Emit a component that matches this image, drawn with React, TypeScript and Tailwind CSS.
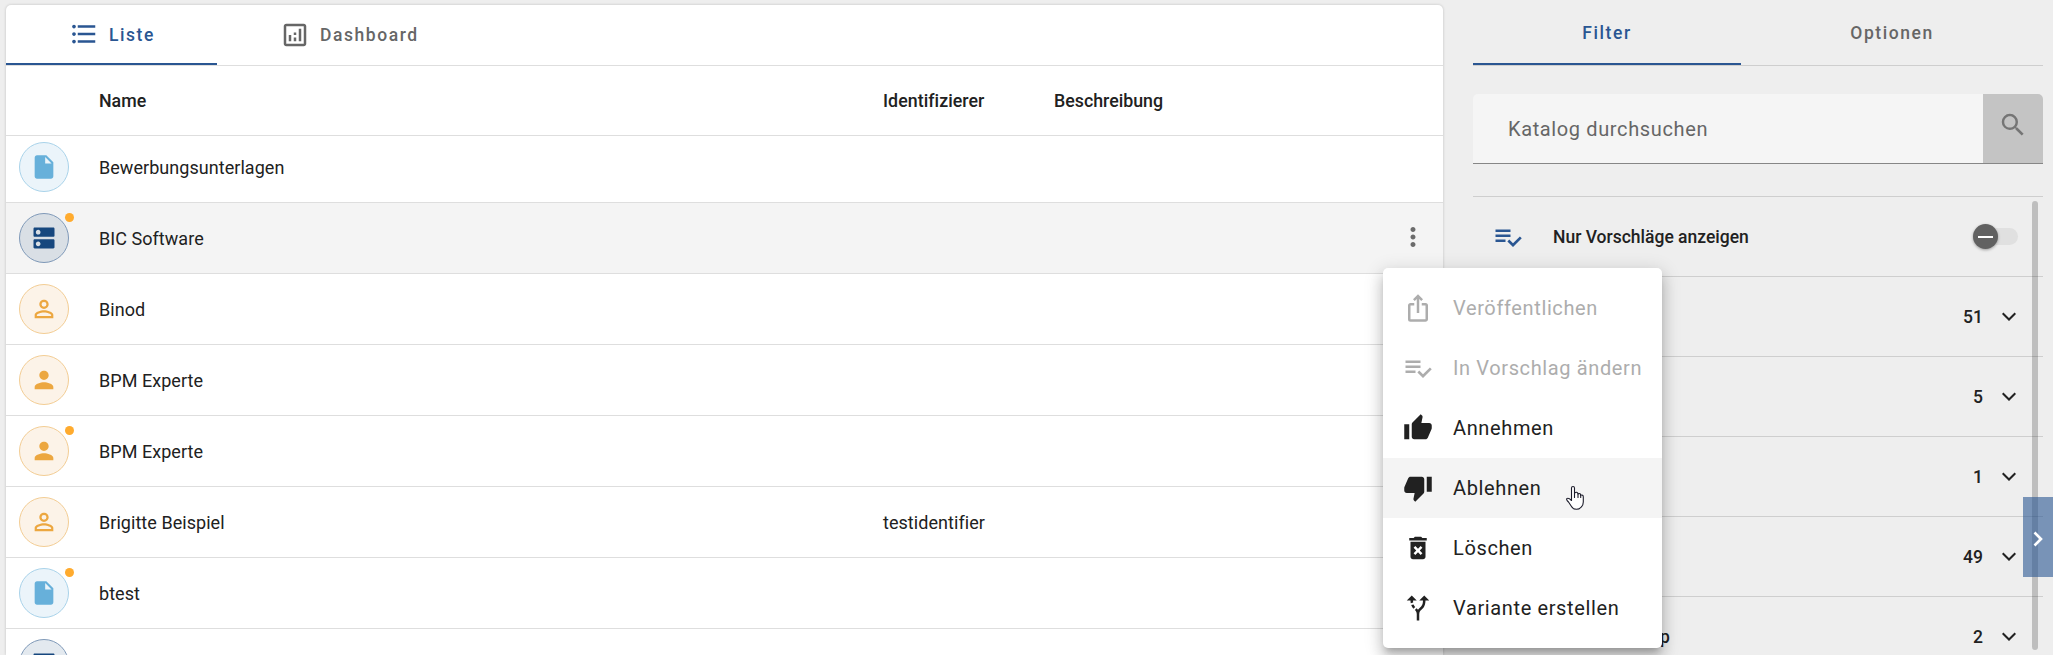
import {
  MdAltRoute,
  MdDeleteForever,
  MdDns,
  MdFormatListBulleted,
  MdInsertDriveFile,
  MdIosShare,
  MdMoreVert,
  MdOutlineAnalytics,
  MdPerson,
  MdPersonOutline,
  MdSearch,
  MdThumbDown,
  MdThumbUp,
} from "react-icons/md";

interface IconProps {
  size?: number;
  className?: string;
}

function PlaylistCheck({ size = 24, className = "" }: IconProps) {
  return (
    <svg width={size} height={size} viewBox="0 0 24 24" fill="currentColor" className={className}>
      <path d="M14 10H2v2h12v-2zm0-4H2v2h12V6zM2 16h8v-2H2v2zm19.5-4.5L23 13l-6.990 7-4.510-4.500L13 14l3.010 3 5.490-5.500z" />
    </svg>
  );
}

function ChevronDown({ className = "" }: IconProps) {
  return (
    <svg width="14" height="10" viewBox="0 0 14 10" fill="none" stroke="currentColor" strokeWidth="2" className={className}>
      <path d="M0.700 1.200L7 7.500L13.300 1.200" />
    </svg>
  );
}

const kinds = {
  document: { icon: MdInsertDriveFile, style: "bg-[#ebf4fa] border-[#a9d3ea] text-[#67b0da]" },
  system: { icon: MdDns, style: "bg-[#16477e]/12 border-[#7f99b8] text-[#16477e]" },
  role: { icon: MdPersonOutline, style: "bg-[#fcf3e8] border-[#f3cd94] text-[#eca740]" },
  person: { icon: MdPerson, style: "bg-[#fcf3e8] border-[#f3cd94] text-[#eca740]" },
};

type Row = {
  name: string;
  kind: keyof typeof kinds;
  identifier?: string;
  pending?: boolean;
  active?: boolean;
};

const rows: Row[] = [
  { name: "Bewerbungsunterlagen", kind: "document" },
  { name: "BIC Software", kind: "system", pending: true, active: true },
  { name: "Binod", kind: "role" },
  { name: "BPM Experte", kind: "person" },
  { name: "BPM Experte", kind: "person", pending: true },
  { name: "Brigitte Beispiel", kind: "role", identifier: "testidentifier" },
  { name: "btest", kind: "document", pending: true },
  { name: "", kind: "system" },
];

const menuItems = [
  { label: "Veröffentlichen", icon: MdIosShare, disabled: true },
  { label: "In Vorschlag ändern", icon: PlaylistCheck, disabled: true },
  { label: "Annehmen", icon: MdThumbUp },
  { label: "Ablehnen", icon: MdThumbDown, hover: true },
  { label: "Löschen", icon: MdDeleteForever },
  { label: "Variante erstellen", icon: MdAltRoute },
];

const filters = [
  { label: "", count: 51 },
  { label: "", count: 5 },
  { label: "", count: 1 },
  { label: "", count: 49 },
  { label: "p", count: 2 },
];

function TableRow({ row }: { row: Row }) {
  const { icon: Icon, style } = kinds[row.kind];
  return (
    <div
      className={`flex h-[71px] shrink-0 items-center border-b border-[#dedede] pl-[13px] text-[18px] tracking-[0.05px] ${row.active ? "bg-[#f4f4f4]" : ""}`}
    >
      <div className={`relative flex size-[50px] items-center justify-center rounded-full border ${style}`}>
        <Icon size={28} />
        {row.pending && <span className="absolute -top-px left-[45px] size-[9px] rounded-full bg-[#ffab2e]" />}
      </div>
      <span className="ml-[30px] w-[784px]">{row.name}</span>
      <span className="flex-1">{row.identifier}</span>
      {row.active && <MdMoreVert size={30} className="mr-[15px] mb-0.5 text-[#6b6b6b]" />}
    </div>
  );
}

function ContextMenu() {
  return (
    <div className="absolute top-[268px] left-[1383px] h-[380px] w-[279px] rounded-[5px] bg-white py-2.5 shadow-[0_6px_6px_-3px_rgba(0,0,0,0.2),0_10px_14px_1px_rgba(0,0,0,0.14),0_4px_18px_3px_rgba(0,0,0,0.12)]">
      {menuItems.map(({ label, icon: Icon, disabled, hover }) => (
        <div
          key={label}
          className={`flex h-[60px] items-center pl-5 text-[20px] tracking-[0.625px] ${disabled ? "text-[#adadad]" : "text-[#212121]"} ${hover ? "bg-[#f4f4f4]" : ""}`}
        >
          <Icon size={30} />
          <span className="ml-5 whitespace-nowrap">{label}</span>
        </div>
      ))}
    </div>
  );
}

function PointerCursor() {
  return (
    <svg
      className="absolute top-[485px] left-[1565px]"
      width="20"
      height="26"
      viewBox="0 0 20 26"
      fill="white"
      stroke="#1c1c2b"
      strokeWidth="1.1"
      strokeLinejoin="round"
      strokeLinecap="round"
    >
      <path d="M6.5 15.5V3Q6.5 1.5 8 1.5T9.500 3V8.500Q10 7 11.500 7.300T13 9Q14.500 8 15.500 9.200V10.200Q18.300 9.500 18.300 12V17Q18.300 20 16.300 22Q14.500 24.300 11.500 24.300Q8 24.300 6.500 21.500L3.500 17Q1 14.800 1.800 13.600Q3.500 12.500 6.500 15.500Z" />
      <path d="M9.500 8.500V12.500M13 9V12.500M15.700 10.200V12.500" fill="none" />
    </svg>
  );
}

function CatalogTable() {
  return (
    <main className="mt-[5px] ml-1.5 flex h-[650px] w-[1437px] flex-col overflow-hidden rounded-t-[5px] bg-white shadow-[0_0_3px_rgba(0,0,0,0.2)]">
      <div className="flex h-[61px] shrink-0 border-b border-[#dedede] text-[17.5px] font-medium tracking-[1.56px]">
        <div className="flex h-[60px] w-[211px] items-center gap-2.5 border-b-2 border-[#2a5692] pl-[63px] text-[#2a5692]">
          <MdFormatListBulleted size={30} />
          <span className="pt-0.5">Liste</span>
        </div>
        <div className="flex h-[60px] w-[268px] items-center gap-2.5 pl-[63px] text-[#666]">
          <MdOutlineAnalytics size={30} />
          <span>Dashboard</span>
        </div>
      </div>
      <div className="flex h-[70px] shrink-0 items-center border-b border-[#dedede] pt-0.5 pl-[93px] text-[17.8px] font-medium">
        <span className="w-[784px]">Name</span>
        <span className="w-[171px] tracking-[0.05px]">Identifizierer</span>
        <span>Beschreibung</span>
      </div>
      <div className="flex min-h-0 flex-1 flex-col overflow-hidden">
        <div className="-mt-1 flex flex-col">
          {rows.map((row, i) => (
            <TableRow key={i} row={row} />
          ))}
        </div>
      </div>
    </main>
  );
}

function FilterPanel() {
  return (
    <aside className="ml-[30px] flex h-[655px] w-[570px] flex-col overflow-hidden">
      <div className="flex h-[66px] shrink-0 border-b border-[#cecece] text-[17.5px] font-medium tracking-[1.56px]">
        <div className="mt-[5px] flex h-[60px] w-[268px] items-center justify-center border-b-2 border-[#2a5692] pb-0.5 text-[#2a5692]">
          Filter
        </div>
        <div className="mt-[5px] flex h-[60px] flex-1 items-center justify-center pb-1 text-[#666]">Optionen</div>
      </div>
      <div className="mt-7 flex h-[70px] shrink-0 overflow-hidden rounded-t-[5px] border-b border-[#868686] bg-[#f5f5f5]">
        <div className="flex flex-1 items-center pl-[35px] text-[20px] tracking-[0.625px] text-[#666]">
          Katalog durchsuchen
        </div>
        <div className="flex w-[60px] justify-center bg-[#c4c4c4] pt-4 text-[#757575]">
          <MdSearch size={30} />
        </div>
      </div>
      <div className="mt-8 flex h-[81px] shrink-0 items-center border-y border-[#cecece] pl-5 text-[#212121]">
        <PlaylistCheck size={30} className="text-[#2a5692]" />
        <span className="ml-[30px] flex-1 pt-0.5 font-medium">Nur Vorschläge anzeigen</span>
        <div className="relative mr-[25px] h-[17px] w-[45px] rounded-full bg-[#e0e0e0]">
          <div className="absolute -top-1 left-0 flex size-[25px] items-center justify-center rounded-full bg-[#616161] shadow-[0_1px_3px_rgba(0,0,0,0.35)]">
            <span className="h-0.5 w-[15px] bg-white" />
          </div>
        </div>
      </div>
      {filters.map((filter, i) => (
        <div key={i} className="flex h-20 shrink-0 items-center border-b border-[#cecece] pt-0.5 pl-[187px] font-medium">
          <span className="flex-1">{filter.label}</span>
          <span>{filter.count}</span>
          <ChevronDown className="mr-[27px] mb-0.5 ml-[19px]" />
        </div>
      ))}
    </aside>
  );
}

export default function App() {
  return (
    <div className="relative flex h-[655px] w-[2053px] overflow-hidden bg-[#eee] font-['Roboto',sans-serif] text-[17.5px] text-[#212121]">
      <CatalogTable />
      <FilterPanel />
      <div className="absolute top-[201px] left-[2032px] h-[449px] w-1.5 rounded-full bg-black/20" />
      <div className="absolute top-[497px] left-[2023px] flex h-20 w-[30px] items-center justify-center bg-[#2a5692]/60 pt-1 text-white">
        <svg width="12" height="16" viewBox="0 0 12 16" fill="none" stroke="currentColor" strokeWidth="2.600">
          <path d="M2.500 1.500L9 8L2.500 14.500" />
        </svg>
      </div>
      <ContextMenu />
      <PointerCursor />
    </div>
  );
}
